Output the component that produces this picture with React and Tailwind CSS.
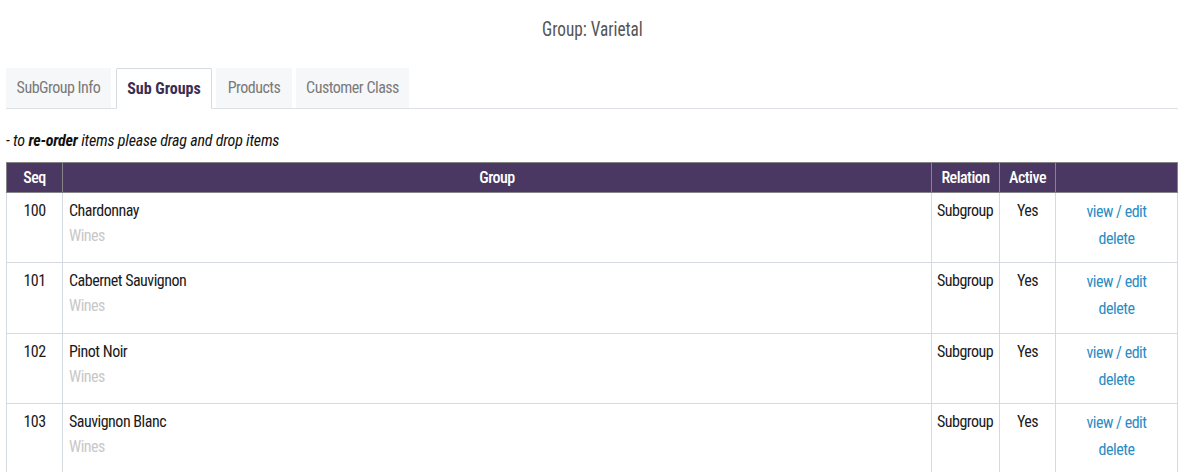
import React from "react";

const ROWS = [
  { seq: 100, name: "Chardonnay" },
  { seq: 101, name: "Cabernet Sauvignon" },
  { seq: 102, name: "Pinot Noir" },
  { seq: 103, name: "Sauvignon Blanc" },
];

const TABS = [
  { label: "SubGroup Info", cls: "w-[105px] mr-[1px]" },
  { label: "Sub Groups", cls: "w-[96px]", active: true },
  { label: "Products", cls: "w-[76px]" },
  { label: "Customer Class", cls: "w-[113px]" },
];

export default function App() {
  return (
    <div className="min-h-[472px] bg-white px-[6px] font-['Roboto_Condensed',Roboto,sans-serif] text-[16px] tracking-[-0.5px] text-[#1a1a1a]">
      <h1 className="pt-[15px] text-center text-[21px] leading-[28px] tracking-normal text-[#555]">
        <span className="inline-block scale-x-[0.82]">Group: Varietal</span>
      </h1>

      <div className="mt-[25px] flex items-end gap-[4px] border-b border-[#dde1e6]">
        {TABS.map((t) =>
          t.active ? (
            <div key={t.label} className={t.cls + " -mb-px flex h-[41px] items-center justify-center rounded-t-[2px] border border-b-white border-[#d5dae0] bg-white font-bold tracking-normal text-[#3b2d52]"}>
              {t.label}
            </div>
          ) : (
            <div key={t.label} className={t.cls + " flex h-[40px] items-center justify-center bg-[#f6f7f9] text-[#7a7a7a]"}>
              {t.label}
            </div>
          )
        )}
      </div>

      <p className="mt-[22px] italic leading-[20px] tracking-[-0.2px] text-[#111]">
        - to <b>re-order</b> items please drag and drop items
      </p>

      <table className="mt-[11px] w-full table-fixed border-collapse">
        <colgroup>
          <col className="w-[56px]" />
          <col />
          <col className="w-[68px]" />
          <col className="w-[56px]" />
          <col className="w-[122px]" />
        </colgroup>
        <thead>
          <tr className="h-[30px] bg-[#4a3862] text-white">
            <th className="border border-[#858585] font-medium">Seq</th>
            <th className="border border-[#858585] font-medium">Group</th>
            <th className="border border-[#858585] font-medium">Relation</th>
            <th className="border border-[#858585] font-medium">Active</th>
            <th className="border border-[#858585] font-medium"></th>
          </tr>
        </thead>
        <tbody>
          {ROWS.map((r, i) => (
            <tr key={r.seq} className={(i === 1 ? "h-[71px]" : "h-[70px]") + " align-top leading-[20px]"}>
              <td className="border border-[#d5dae0] pt-[8px] text-center">{r.seq}</td>
              <td className="border border-[#d5dae0] px-[6px] pt-[8px]">
                <div>{r.name}</div>
                <div className="mt-[5px] text-[#c8c8c8]">Wines</div>
              </td>
              <td className="border border-[#d5dae0] px-[5px] pt-[8px]">Subgroup</td>
              <td className="border border-[#d5dae0] pt-[8px] text-center">Yes</td>
              <td className="border border-[#d5dae0] pt-[9px] text-center text-[#2a8cc4]">
                <div>view / edit</div>
                <div className="mt-[7px]">delete</div>
              </td>
            </tr>
          ))}
        </tbody>
      </table>
    </div>
  );
}
